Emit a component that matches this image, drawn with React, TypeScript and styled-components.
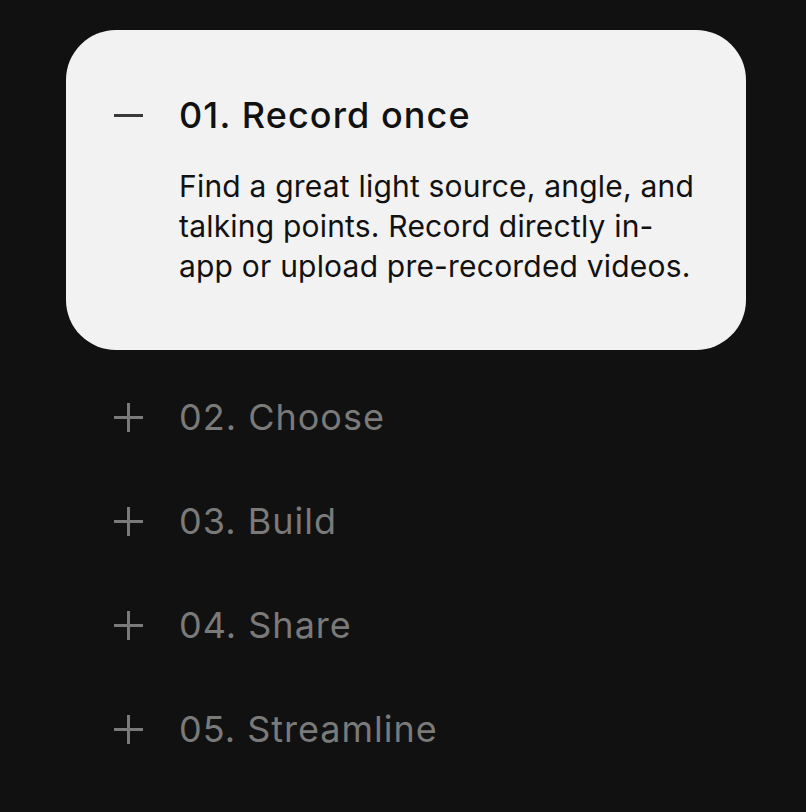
import React from "react";
import styled, { createGlobalStyle } from "styled-components";

const Global = createGlobalStyle`
  html, body { margin: 0; padding: 0; background: #111111; }
  body { font-family: Inter, "Noto Sans", sans-serif; }
`;

const Page = styled.div`
  min-height: 812px;
  background: #111111;
  padding: 30px 60px 0 66px;
  box-sizing: border-box;
`;

const List = styled.div`
  width: 680px;
  display: flex;
  flex-direction: column;
`;

const Item = styled.div<{ $open?: boolean }>`
  display: grid;
  grid-template-columns: 29px 1fr;
  column-gap: 36px;
  align-items: center;
  padding: ${(p) => (p.$open ? "64px 48px 64px" : "0 48px")};
  height: ${(p) => (p.$open ? "auto" : "104px")};
  box-sizing: border-box;
  background: ${(p) => (p.$open ? "#f2f2f2" : "transparent")};
  border-radius: 50px;
  margin-bottom: ${(p) => (p.$open ? "15px" : "0")};
`;

const Title = styled.div<{ $open?: boolean }>`
  font-size: 36px;
  line-height: 42px;
  font-weight: ${(p) => (p.$open ? 500 : 400)};
  letter-spacing: ${(p) => (p.$open ? "1.1px" : "1px")};
  color: ${(p) => (p.$open ? "#111111" : "#7a7a7a")};
`;

const Body = styled.p`
  grid-column: 2;
  margin: 30px 0 0;
  font-size: 30px;
  line-height: 40px;
  letter-spacing: 0.2px;
  color: #111111;
  width: 524px;
`;

const IconBox = styled.div`
  width: 29px;
  height: 29px;
  display: flex;
  align-items: center;
  justify-content: center;
`;

const Minus = () => (
  <svg width="29" height="29" viewBox="0 0 29 29">
    <rect x="0" y="13" width="29" height="3" fill="#3a3a3a" />
  </svg>
);

const Plus = () => (
  <svg width="29" height="29" viewBox="0 0 29 29">
    <rect x="0" y="13" width="29" height="3" fill="#7a7a7a" />
    <rect x="13" y="0" width="3" height="29" fill="#7a7a7a" />
  </svg>
);

const items = ["02. Choose", "03. Build", "04. Share", "05. Streamline"];

export default function App() {
  return (
    <>
      <Global />
      <Page>
        <List>
          <Item $open>
            <IconBox>
              <Minus />
            </IconBox>
            <Title $open>01. Record once</Title>
            <Body>
              Find a great light source, angle, and talking points. Record directly in-app or upload pre-recorded videos.
            </Body>
          </Item>
          {items.map((t) => (
            <Item key={t}>
              <IconBox>
                <Plus />
              </IconBox>
              <Title>{t}</Title>
            </Item>
          ))}
        </List>
      </Page>
    </>
  );
}
